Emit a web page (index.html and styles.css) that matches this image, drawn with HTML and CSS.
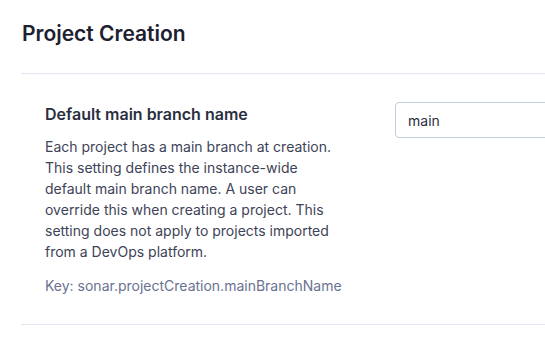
FILE: index.html
```html
<!DOCTYPE html>
<html lang="en">
<head>
  <meta charset="UTF-8" />
  <title>Project Creation</title>
  <link rel="stylesheet" href="styles.css">
</head>
<body>
  <main class="settings">
    <h2 class="settings-title">Project Creation</h2>
    <div class="setting-row">
      <div class="setting-info">
        <h3 class="setting-name">Default main branch name</h3>
        <p class="setting-desc">Each project has a main branch at creation. This setting defines the instance-wide default main branch name. A user can override this when creating a project. This setting does not apply to projects imported from a DevOps platform.</p>
        <div class="setting-key">Key: sonar.projectCreation.mainBranchName</div>
      </div>
      <div class="setting-input">
        <input type="text" value="main">
      </div>
    </div>
  </main>
</body>
</html>
```

FILE: styles.css
```css
* { box-sizing: border-box; }
body {
  margin: 0;
  font-family: 'Inter', sans-serif;
  background: #fff;
  color: #3e4357;
  overflow: hidden;
}
.settings {
  padding: 0 0 0 21px;
}
.settings-title {
  margin: 0;
  padding: 20px 0 25px 1px;
  font-size: 21px;
  font-weight: 600;
  line-height: 28px;
  color: #1d212f;
  border-bottom: 1px solid #e1e6f3;
}
.setting-row {
  display: flex;
  padding: 28px 0 28px 24px;
  border-bottom: 1px solid #e1e6f3;
}
.setting-info {
  width: 300px;
  flex-shrink: 0;
}
.setting-name {
  margin: 0 0 10px;
  font-size: 16px;
  font-weight: 600;
  line-height: 24px;
  color: #2a2f40;
}
.setting-desc {
  margin: 0 0 14px;
  font-size: 14px;
  line-height: 21px;
}
.setting-key {
  font-size: 14px;
  line-height: 20px;
  color: #6a7290;
}
.setting-input {
  margin-left: 50px;
  min-width: 0;
  overflow: hidden;
}
.setting-input input {
  width: 180px;
  height: 36px;
  padding: 0 12px;
  border: 1px solid #c6cee0;
  border-radius: 4px;
  font-family: 'Inter', sans-serif;
  font-size: 14px;
  color: #2a2f40;
  outline: none;
}
```
